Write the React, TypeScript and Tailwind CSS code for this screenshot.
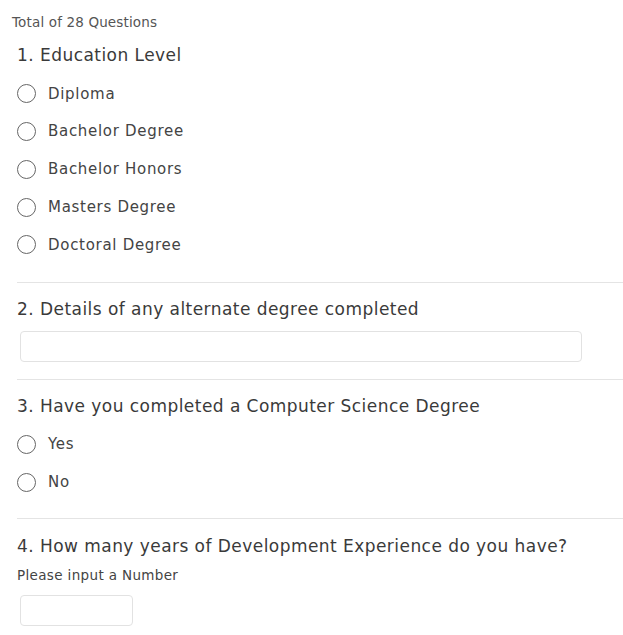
import React from "react";

const font = { fontFamily: '"DejaVu Sans", Verdana, sans-serif' };

function Radio({ label }: { label: string }) {
  return (
    <div className="flex h-[37.75px] items-center pl-[17px]">
      <span className="box-border inline-block h-[19px] w-[19px] rounded-full border-[1.7px] border-[#666]" />
      <span className="ml-[12px] text-[15px] tracking-[0.7px] text-[#444]">{label}</span>
    </div>
  );
}

function Title({ children, className = "" }: { children: React.ReactNode; className?: string }) {
  return (
    <div className={`flex h-[26px] items-center whitespace-nowrap pl-[17px] text-[17px] tracking-[0.45px] text-[#3a3a3a] ${className}`}>
      {children}
    </div>
  );
}

function Divider({ className = "" }: { className?: string }) {
  return <div className={`ml-[17px] h-px bg-[#e4e4e4] ${className}`} />;
}

export default function App() {
  return (
    <div className="min-h-[635px] w-[623px] bg-white pt-px" style={font}>
      <div className="flex h-[42px] items-center pl-[12px] text-[13.5px] tracking-[0.15px] text-[#555]">Total of 28 Questions</div>
      <Title>1. Education Level</Title>
      <div className="mt-[6px]">
        <Radio label="Diploma" />
        <Radio label="Bachelor Degree" />
        <Radio label="Bachelor Honors" />
        <Radio label="Masters Degree" />
        <Radio label="Doctoral Degree" />
      </div>
      <Divider className="mt-[18px]" />
      <Title className="mt-[14px]">2. Details of any alternate degree completed</Title>
      <div className="mt-[8px] ml-[20px] h-[31px] w-[562px] rounded-[4px] border border-[#e2e2e2]" />
      <Divider className="mt-[17px]" />
      <Title className="mt-[14px]">3. Have you completed a Computer Science Degree</Title>
      <div className="mt-[6px]">
        <Radio label="Yes" />
        <Radio label="No" />
      </div>
      <Divider className="mt-[17px]" />
      <Title className="mt-[14px]">4. How many years of Development Experience do you have?</Title>
      <div className="mt-[7px] flex h-[18px] items-center pl-[17px] text-[13.5px] tracking-[0.35px] text-[#444]">Please input a Number</div>
      <div className="mt-[11px] ml-[20px] h-[31px] w-[113px] rounded-[4px] border border-[#e2e2e2]" />
    </div>
  );
}
